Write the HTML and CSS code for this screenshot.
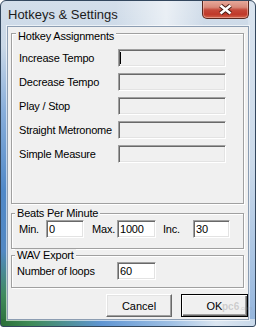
FILE: index.html
```html
<!DOCTYPE html>
<html>
<head>
    <title>Hotkeys &amp; Settings</title>
    <link rel="stylesheet" href="styles.css">
</head>
<body>
    <div class="window">
        <div class="titlebar">
            <span class="title">Hotkeys &amp; Settings</span>
            <button class="close" aria-label="Close">
                <svg width="45" height="18" viewBox="0 0 45 18">
                    <path d="M17.5 5.5 L27.5 13.5 M27.5 5.5 L17.5 13.5" stroke="#4a1d15" stroke-width="4.6" fill="none"/>
                    <path d="M17.5 5.5 L27.5 13.5 M27.5 5.5 L17.5 13.5" stroke="#ffffff" stroke-width="2.6" fill="none"/>
                </svg>
            </button>
        </div>

        <div class="client">
            <div class="group group-hotkeys">
                <div class="group-title">Hotkey Assignments</div>
                <div class="hotkey-list">
                    <label>Increase Tempo</label>
                    <div class="hotkey-box"><span class="caret"></span></div>
                    <label>Decrease Tempo</label>
                    <div class="hotkey-box"></div>
                    <label>Play / Stop</label>
                    <div class="hotkey-box"></div>
                    <label>Straight Metronome</label>
                    <div class="hotkey-box"></div>
                    <label>Simple Measure</label>
                    <div class="hotkey-box"></div>
                </div>
            </div>

            <div class="group group-bpm">
                <div class="group-title">Beats Per Minute</div>
                <div class="field-row">
                    <span class="lbl lbl-min">Min.</span>
                    <input class="field field-min" type="text" value="0">
                    <span class="lbl lbl-max">Max.</span>
                    <input class="field field-max" type="text" value="1000">
                    <span class="lbl lbl-inc">Inc.</span>
                    <input class="field field-inc" type="text" value="30">
                </div>
            </div>

            <div class="group group-wav">
                <div class="group-title">WAV Export</div>
                <div class="field-row">
                    <span class="lbl lbl-loops">Number of loops</span>
                    <input class="field field-loops" type="text" value="60">
                </div>
            </div>

            <div class="buttons">
                <button class="btn">Cancel</button>
                <button class="btn btn-default">OK</button>
            </div>
        </div>

        <span class="watermark">pc6<small>.com</small></span>
    </div>
</body>
</html>
```

FILE: styles.css
```css
* {
    box-sizing: border-box;
}
body {
    margin: 0;
    font-family: "Liberation Sans", Arial, sans-serif;
    font-size: 11px;
    letter-spacing: -0.2px;
    color: #000;
    background: #fff;
}
.window {
    position: relative;
    width: 256px;
    height: 327px;
    display: flex;
    flex-direction: column;
    padding: 0 6px 6px;
    border: 1px solid #33475e;
    border-radius: 6px 6px 3px 3px;
    overflow: hidden;
    background:
        linear-gradient(to right, #2c7038 0, #3f8b58 30px, #5f95d2 100px, #9fc0e4 170px, #dbe6f1 215px, #c7d8ea 256px) bottom / 100% 7px no-repeat,
        linear-gradient(to bottom, #dae4ef 0, #cbdaea 50%, #a9c4e3 80%, #93b4dc 100%) right / 7px 100% no-repeat,
        linear-gradient(to right, rgba(255,255,255,0) 45%, rgba(255,255,255,0.55) 65%, rgba(255,255,255,0) 80%) top / 100% 26px no-repeat,
        linear-gradient(to bottom, #d3deea 0, #cad8e7 45px, #88aedb 110px, #5189c8 190px, #5288c3 250px, #3f8a5c 295px, #2b6e37 327px);
}

/* title bar */
.titlebar {
    display: flex;
    align-items: flex-start;
    height: 25px;
}
.title {
    margin: 6px 0 0 1px;
    font-size: 13px;
    line-height: 15px;
    letter-spacing: 0;
    color: #1b1b1b;
}
.close {
    margin: -1px 0 0 auto;
    width: 47px;
    height: 19px;
    padding: 0;
    border: 1px solid #5a281f;
    border-top: none;
    border-radius: 0 0 5px 5px;
    background: linear-gradient(to bottom, #e9ad9f 0, #d98a7a 40%, #c5493a 55%, #c0392a 80%, #d0644c 100%);
    box-shadow: inset 0 0 0 1px rgba(255,210,200,0.45);
}
.close svg {
    display: block;
}

/* client area */
.client {
    flex: 1;
    display: flex;
    flex-direction: column;
    padding: 6px 0 0 3px;
    background-color: #f0f0f0;
    border: 1px solid #8c9db2;
    box-shadow: 0 0 0 1px rgba(255,255,255,0.6);
}

/* group boxes */
.group {
    width: 233px;
    border: 1px solid #a0a0a0;
    box-shadow: inset 1px 1px 0 #fff, 1px 1px 0 #fff;
}
.group-title {
    width: fit-content;
    margin: -7px 0 0 3px;
    padding: 0 2px;
    line-height: 13px;
    background-color: #f0f0f0;
}
.group-hotkeys {
    height: 171px;
}
.group-hotkeys .group-title {
    margin-top: -4px;
    margin-left: 4px;
}
.group-bpm {
    height: 36px;
    margin-top: 9px;
}
.group-wav {
    height: 33px;
    margin-top: 6px;
}

.hotkey-list {
    display: grid;
    grid-template-columns: 99px 108px;
    grid-auto-rows: 18px;
    row-gap: 6px;
    margin-top: 6px;
    padding-left: 7px;
}
.hotkey-list label {
    line-height: 18px;
    white-space: nowrap;
}
.hotkey-box {
    display: flex;
    align-items: center;
    border: 1px solid;
    border-color: #a0a0a0 #fff #fff #a0a0a0;
    box-shadow: inset 1px 1px 0 #696969, inset -1px -1px 0 #e3e3e3;
    background-color: #f0f0f0;
}
.caret {
    width: 1px;
    height: 12px;
    margin-left: 1px;
    background-color: #000;
}

/* edit rows */
.field-row {
    display: flex;
    align-items: center;
    height: 18px;
    padding-left: 7px;
}
.group-wav .field-row {
    padding-left: 5px;
}
.lbl {
    line-height: 18px;
    white-space: nowrap;
}
.lbl-min { width: 27px; }
.lbl-max { width: 25px; margin-left: 8px; }
.lbl-inc { width: 30px; margin-left: 7px; }
.lbl-loops { width: 100px; }

.field {
    height: 18px;
    margin: 0;
    padding: 0 2px;
    font-family: "Liberation Sans", Arial, sans-serif;
    font-size: 11px;
    letter-spacing: -0.2px;
    color: #000;
    border: 1px solid;
    border-color: #a0a0a0 #fff #fff #a0a0a0;
    box-shadow: inset 1px 1px 0 #696969, inset -1px -1px 0 #e3e3e3;
    background-color: #fff;
    outline: none;
}
.field-min { width: 38px; }
.field-max { width: 39px; }
.field-inc { width: 37px; }
.field-loops { width: 39px; }

/* buttons */
.buttons {
    display: flex;
    justify-content: flex-end;
    gap: 9px;
    margin-top: 6px;
}
.btn {
    width: 66px;
    height: 23px;
    padding: 0;
    font-family: "Liberation Sans", Arial, sans-serif;
    font-size: 11px;
    color: #000;
    background-color: #f0f0f0;
    border: 1px solid;
    border-color: #fff #696969 #696969 #fff;
    box-shadow: inset -1px -1px 0 #a0a0a0, inset 1px 1px 0 #e3e3e3;
}
.btn-default {
    width: 67px;
    border: 1px solid #000;
    box-shadow: inset 1px 1px 0 #fff, inset -1px -1px 0 #696969, inset -2px -2px 0 #a0a0a0;
}

/* site watermark in the corner of the OK button */
.watermark {
    position: absolute;
    left: 221px;
    top: 300px;
    font-size: 10px;
    font-weight: bold;
    letter-spacing: 0;
    color: rgba(150, 150, 150, 0.4);
}
.watermark small {
    font-size: 6px;
    font-weight: normal;
}
```
